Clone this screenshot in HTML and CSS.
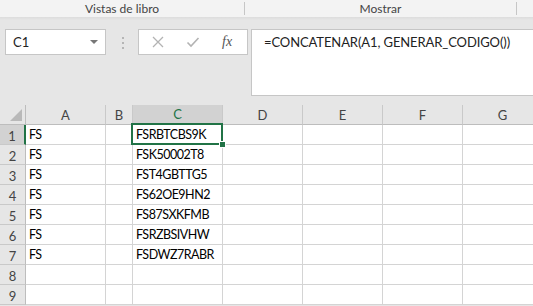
FILE: index.html
```html
<!DOCTYPE html>
<html lang="es">
<head>
    <meta charset="UTF-8">
    <title>Libro1 - Excel</title>
    <link rel="stylesheet" href="styles.css">
</head>
<body>

    <div class="ribbon">
        <div class="group group-views">Vistas de libro</div>
        <div class="group group-show">Mostrar</div>
    </div>
    <div class="ribbon-shadow"></div>

    <div class="formula-bar">
        <div class="name-box">
            <span>C1</span>
            <span class="arrow"></span>
        </div>
        <div class="grip"><i></i><i></i><i></i></div>
        <div class="buttons">
            <svg class="btn-icon" width="14" height="14" viewBox="0 0 14 14">
                <path d="M2 2 L12 12 M12 2 L2 12" stroke="#b3b3b3" stroke-width="1.3" fill="none"/>
            </svg>
            <svg class="btn-icon" width="14" height="14" viewBox="0 0 14 14">
                <path d="M1.5 7.5 L5 11 L12.5 3" stroke="#b3b3b3" stroke-width="1.6" fill="none"/>
            </svg>
            <span class="fx">fx</span>
        </div>
        <div class="formula">=CONCATENAR(A1, GENERAR_CODIGO())</div>
    </div>

    <div class="sheet">
        <div class="row head-row">
            <div class="corner"><span class="tri"></span></div>
            <div class="col-head w-a">A</div>
            <div class="col-head w-b">B</div>
            <div class="col-head w-c active">C</div>
            <div class="col-head w-d">D</div>
            <div class="col-head w-d">E</div>
            <div class="col-head w-d">F</div>
            <div class="col-head w-d">G</div>
        </div>
        <div class="row">
            <div class="row-head active">1</div>
            <div class="cell w-a">FS</div>
            <div class="cell w-b"></div>
            <div class="cell w-c selected">FSRBTCBS9K</div>
            <div class="cell w-d"></div><div class="cell w-d"></div><div class="cell w-d"></div><div class="cell w-d"></div>
        </div>
        <div class="row">
            <div class="row-head">2</div>
            <div class="cell w-a">FS</div>
            <div class="cell w-b"></div>
            <div class="cell w-c">FSK50002T8</div>
            <div class="cell w-d"></div><div class="cell w-d"></div><div class="cell w-d"></div><div class="cell w-d"></div>
        </div>
        <div class="row">
            <div class="row-head">3</div>
            <div class="cell w-a">FS</div>
            <div class="cell w-b"></div>
            <div class="cell w-c">FST4GBTTG5</div>
            <div class="cell w-d"></div><div class="cell w-d"></div><div class="cell w-d"></div><div class="cell w-d"></div>
        </div>
        <div class="row">
            <div class="row-head">4</div>
            <div class="cell w-a">FS</div>
            <div class="cell w-b"></div>
            <div class="cell w-c">FS62OE9HN2</div>
            <div class="cell w-d"></div><div class="cell w-d"></div><div class="cell w-d"></div><div class="cell w-d"></div>
        </div>
        <div class="row">
            <div class="row-head">5</div>
            <div class="cell w-a">FS</div>
            <div class="cell w-b"></div>
            <div class="cell w-c">FS87SXKFMB</div>
            <div class="cell w-d"></div><div class="cell w-d"></div><div class="cell w-d"></div><div class="cell w-d"></div>
        </div>
        <div class="row">
            <div class="row-head">6</div>
            <div class="cell w-a">FS</div>
            <div class="cell w-b"></div>
            <div class="cell w-c">FSRZBSIVHW</div>
            <div class="cell w-d"></div><div class="cell w-d"></div><div class="cell w-d"></div><div class="cell w-d"></div>
        </div>
        <div class="row">
            <div class="row-head">7</div>
            <div class="cell w-a">FS</div>
            <div class="cell w-b"></div>
            <div class="cell w-c">FSDWZ7RABR</div>
            <div class="cell w-d"></div><div class="cell w-d"></div><div class="cell w-d"></div><div class="cell w-d"></div>
        </div>
        <div class="row">
            <div class="row-head">8</div>
            <div class="cell w-a"></div>
            <div class="cell w-b"></div>
            <div class="cell w-c"></div>
            <div class="cell w-d"></div><div class="cell w-d"></div><div class="cell w-d"></div><div class="cell w-d"></div>
        </div>
        <div class="row">
            <div class="row-head">9</div>
            <div class="cell w-a"></div>
            <div class="cell w-b"></div>
            <div class="cell w-c"></div>
            <div class="cell w-d"></div><div class="cell w-d"></div><div class="cell w-d"></div><div class="cell w-d"></div>
        </div>
    </div>

</body>
</html>
```

FILE: styles.css
```css
body {
    margin: 0;
    width: 533px;
    height: 306px;
    overflow: hidden;
    background: #e6e6e6;
    font-family: Lato, "Liberation Sans", sans-serif;
}

/* ribbon group labels */
.ribbon {
    display: flex;
    height: 17px;
    background: #f3f3f3;
    color: #444;
    font-size: 12px;
}

.group {
    display: flex;
    align-items: center;
    justify-content: center;
    height: 13px;
    margin-top: 2px;
    border-right: 1px solid #c6c6c6;
}

.group-views {
    width: 244px;
}

.group-show {
    width: 271px;
}

.ribbon-shadow {
    height: 3px;
    background: linear-gradient(#dcdcdc, #e6e6e6);
}

/* formula bar */
.formula-bar {
    display: flex;
    align-items: flex-start;
    height: 85px;
    padding-top: 9px;
    padding-left: 5px;
    box-sizing: border-box;
}

.name-box {
    display: flex;
    align-items: center;
    justify-content: space-between;
    width: 101px;
    height: 26px;
    box-sizing: border-box;
    padding: 0 7px 0 7px;
    background: #fff;
    border: 1px solid #c6c6c6;
    font-size: 13px;
    color: #222;
}

.arrow {
    width: 0;
    height: 0;
    border-left: 4px solid transparent;
    border-right: 4px solid transparent;
    border-top: 4px solid #777;
}

.grip {
    display: flex;
    flex-direction: column;
    gap: 3px;
    margin: 8px 14px 0 16px;
}

.grip i {
    display: block;
    width: 2px;
    height: 2px;
    background: #b5b5b5;
}

.buttons {
    display: flex;
    align-items: center;
    width: 110px;
    height: 26px;
    box-sizing: border-box;
    padding-left: 12px;
    background: #fff;
    border: 1px solid #c6c6c6;
}

.btn-icon {
    margin-right: 21px;
}

.fx {
    font-family: "Liberation Serif", serif;
    font-style: italic;
    font-size: 14px;
    color: #555;
    margin-left: 1px;
}

.formula {
    flex: 1;
    height: 67px;
    margin-left: 3px;
    padding: 4px 0 0 12px;
    box-sizing: border-box;
    background: #fff;
    border: 1px solid #c6c6c6;
    border-right: none;
    font-size: 13px;
    letter-spacing: -0.1px;
    color: #222;
}

/* grid */
.sheet {
    background: #fff;
}

.row {
    display: flex;
    height: 20px;
}

.head-row {
    background: #e6e6e6;
}

.corner {
    position: relative;
    width: 26px;
    flex: none;
    box-sizing: border-box;
    border-right: 1px solid #bdbdbd;
    border-bottom: 1px solid #bdbdbd;
    background: #e6e6e6;
}

.tri {
    position: absolute;
    right: 3px;
    bottom: 3px;
    width: 0;
    height: 0;
    border-left: 12px solid transparent;
    border-bottom: 12px solid #b9b9b9;
}

.col-head,
.row-head {
    display: flex;
    align-items: center;
    justify-content: center;
    box-sizing: border-box;
    flex: none;
    background: #e6e6e6;
    color: #444;
    font-size: 13px;
}

.col-head {
    border-right: 1px solid #c9c9c9;
    border-bottom: 1px solid #bdbdbd;
}

.col-head.active {
    background: #d2d2d2;
    color: #217346;
    border-bottom: 2px solid #217346;
}

.row-head {
    width: 26px;
    padding-top: 2px;
    border-right: 1px solid #bdbdbd;
    border-bottom: 1px solid #c9c9c9;
}

.row-head.active {
    background: #d2d2d2;
    border-right: 2px solid #217346;
}

.cell {
    flex: none;
    box-sizing: border-box;
    padding: 2px 0 0 3px;
    border-right: 1px solid #d4d4d4;
    border-bottom: 1px solid #d4d4d4;
    background: #fff;
    color: #000;
    font-size: 12.5px;
    letter-spacing: -0.5px;
    white-space: nowrap;
}

.w-a { width: 80px; }
.w-b { width: 27px; }
.w-c { width: 90px; }
.w-d { width: 80px; }

.cell.selected {
    position: relative;
}

.cell.selected::before {
    content: "";
    position: absolute;
    left: -2px;
    top: -2px;
    right: -1px;
    bottom: -1px;
    border: 2px solid #217346;
}

.cell.selected::after {
    content: "";
    position: absolute;
    right: -4px;
    bottom: -4px;
    width: 5px;
    height: 5px;
    background: #217346;
    border: 1px solid #fff;
}
```
